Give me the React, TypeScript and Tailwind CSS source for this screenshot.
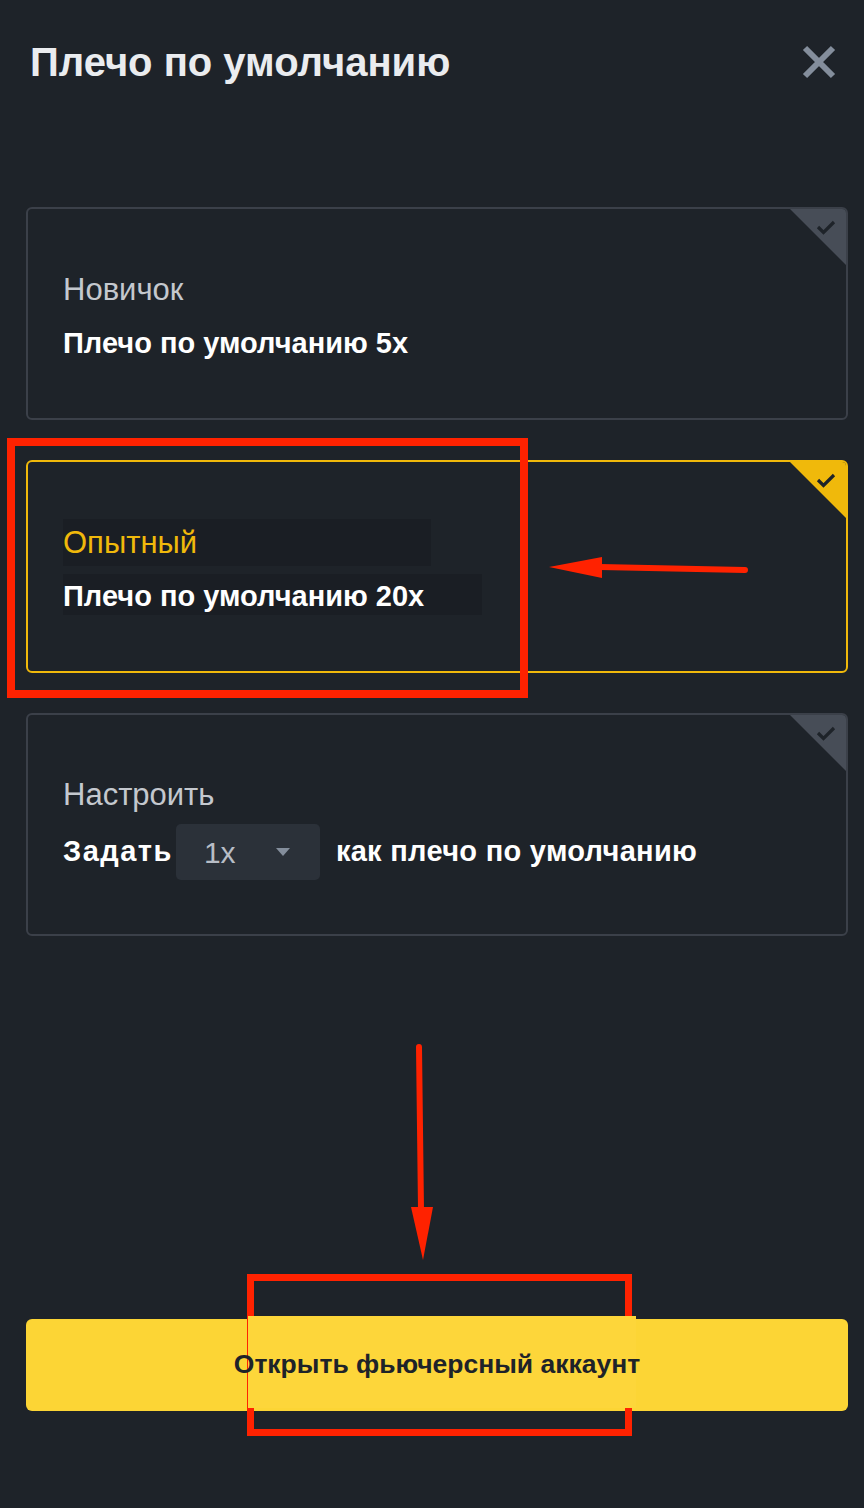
import { useState } from "react";

type Preset = {
  id: string;
  title: string;
  leverage?: number;
};

const presets: Preset[] = [
  { id: "novice", title: "Новичок", leverage: 5 },
  { id: "expert", title: "Опытный", leverage: 20 },
  { id: "custom", title: "Настроить" },
];

const font = { fontFamily: '"Liberation Sans", Arial, sans-serif' };

const CheckCorner = ({ active }: { active: boolean }) => (
  <div
    className={`absolute right-0 top-0 h-[56px] w-[56px] ${active ? "bg-[#f0b90b]" : "bg-[#474d57]"}`}
    style={{ clipPath: "polygon(0 0, 100% 0, 100% 100%)" }}
  >
    <svg className="absolute right-[9px] top-[10px]" width="22" height="16" viewBox="0 0 22 16" fill="none">
      <path d="M3 8l5.5 5.5L19 3" stroke="#1e2329" strokeWidth="3.2" />
    </svg>
  </div>
);

export default function App() {
  const [selected, setSelected] = useState("expert");
  const [custom] = useState(1);

  return (
    <div className="relative h-[1508px] w-[864px] overflow-hidden bg-[#1e2329]" style={font}>
      <div className="flex items-center justify-between pl-[30px] pr-[25px] pt-[36px]">
        <h1 className="text-[40px] font-bold leading-[52px] text-[#eaecef]">Плечо по умолчанию</h1>
        <button className="flex h-[40px] w-[40px] items-center justify-center">
          <svg width="36" height="36" viewBox="0 0 36 36">
            <path d="M4 4l28 28M32 4L4 32" stroke="#848e9c" strokeWidth="6" />
          </svg>
        </button>
      </div>

      <div className="mt-[119px] flex flex-col gap-[40px] pl-[26px] pr-[16px]">
        {presets.map((p) => {
          const active = selected === p.id;
          return (
            <div
              key={p.id}
              onClick={() => setSelected(p.id)}
              className={`relative flex cursor-pointer flex-col justify-center overflow-hidden rounded-[6px] border-2 pl-[35px] ${
                p.leverage ? "h-[213px]" : "h-[223px]"
              } ${active ? "border-[#f0b90b]" : "border-[#3b4049]"}`}
            >
              <CheckCorner active={active} />
              {p.leverage ? (
                <>
                  <div
                    className={`flex h-[47px] items-center text-[31px] leading-none ${
                      active ? "w-[368px] bg-[#1a1e24] text-[#f0b90b]" : "text-[#c4c8ce]"
                    }`}
                  >
                    {p.title}
                  </div>
                  <div
                    className={`mt-[8px] flex h-[41px] items-center pt-[4px] text-[29px] font-bold leading-none text-white ${
                      active ? "w-[419px] bg-[#1a1e24]" : ""
                    }`}
                  >
                    Плечо по умолчанию {p.leverage}x
                  </div>
                </>
              ) : (
                <>
                  <div className="mt-[10px] text-[31px] leading-none text-[#c4c8ce]">{p.title}</div>
                  <div className="mt-[14px] flex items-center text-[29px] font-bold text-white">
                    <span className="tracking-[1.5px]">Задать</span>
                    <div className="ml-[3px] flex h-[56px] w-[144px] items-center rounded-[5px] bg-[#2b3139] pl-[28px] pr-[29px]">
                      <span className="text-[30px] font-normal text-[#b7bdc6]">{custom}x</span>
                      <svg className="ml-auto" width="16" height="10" viewBox="0 0 16 10">
                        <path d="M1 1h14L8 9z" fill="#848e9c" />
                      </svg>
                    </div>
                    <span className="ml-[16px] tracking-[0.3px]">как плечо по умолчанию</span>
                  </div>
                </>
              )}
            </div>
          );
        })}
      </div>

      <div className="absolute bottom-[97px] left-[26px] right-[16px]">
        <button className="relative flex h-[92px] w-full items-center justify-center rounded-[6px] bg-[#fcd535] text-[26.5px] font-bold text-[#1e2329]">
          {/* highlight frame and patch sit between the button fill and its label */}
          <span className="pointer-events-none absolute left-[221px] top-[-45px] h-[162px] w-[385px] border-[7px] border-[#ff2200]" />
          <span className="absolute left-[222px] top-[-3px] h-[92px] w-[388px] bg-[#fdd63a]" />
          <span className="relative">Открыть фьючерсный аккаунт</span>
        </button>
      </div>

      {/* annotations */}
      <div className="pointer-events-none absolute left-[7px] top-[438px] h-[260px] w-[521px] border-[8px] border-[#ff2200]" />
      <svg className="pointer-events-none absolute left-0 top-0" width="864" height="1508">
        <path d="M745 570L600 567" stroke="#ff2200" strokeWidth="6" strokeLinecap="round" />
        <path d="M549 567L602 557L602 578z" fill="#ff2200" />
        <path d="M419 1047L421 1210" stroke="#ff2200" strokeWidth="6" strokeLinecap="round" />
        <path d="M411 1207L433 1207L423 1260z" fill="#ff2200" />
      </svg>
    </div>
  );
}
